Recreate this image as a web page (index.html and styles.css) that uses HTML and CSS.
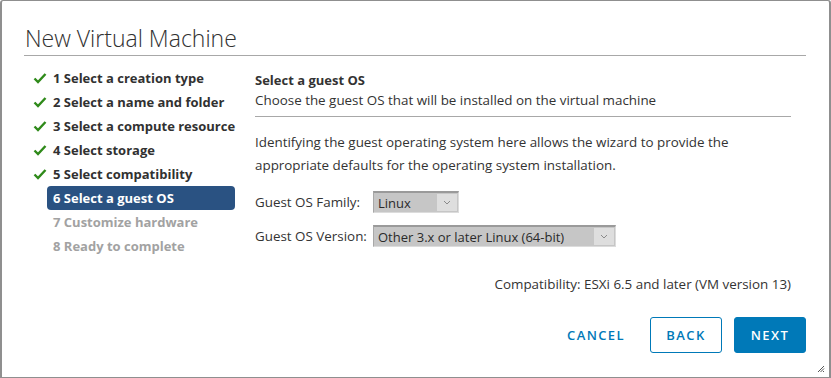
FILE: index.html
```html
<!DOCTYPE html>
<html lang="en">
<head>
    <meta charset="UTF-8">
    <title>New Virtual Machine</title>
    <link rel="stylesheet" href="styles.css">
</head>
<body>
    <div class="dialog">
        <div class="dialog-header">
            <h1>New Virtual Machine</h1>
        </div>

        <div class="dialog-body">
            <ul class="steps">
                <li class="done"><svg class="check" viewBox="0 0 14 12"><path d="M1.5 6.5 L5 10 L12.5 2" /></svg><span>1 Select a creation type</span></li>
                <li class="done"><svg class="check" viewBox="0 0 14 12"><path d="M1.5 6.5 L5 10 L12.5 2" /></svg><span>2 Select a name and folder</span></li>
                <li class="done"><svg class="check" viewBox="0 0 14 12"><path d="M1.5 6.5 L5 10 L12.5 2" /></svg><span>3 Select a compute resource</span></li>
                <li class="done"><svg class="check" viewBox="0 0 14 12"><path d="M1.5 6.5 L5 10 L12.5 2" /></svg><span>4 Select storage</span></li>
                <li class="done"><svg class="check" viewBox="0 0 14 12"><path d="M1.5 6.5 L5 10 L12.5 2" /></svg><span>5 Select compatibility</span></li>
                <li class="active"><i class="check"></i><span>6 Select a guest OS</span></li>
                <li class="todo"><i class="check"></i><span>7 Customize hardware</span></li>
                <li class="todo"><i class="check"></i><span>8 Ready to complete</span></li>
            </ul>

            <div class="content">
                <div class="page-title">
                    <h2>Select a guest OS</h2>
                    <p>Choose the guest OS that will be installed on the virtual machine</p>
                </div>
                <p class="intro">Identifying the guest operating system here allows the wizard to provide the appropriate defaults for the operating system installation.</p>

                <div class="form">
                    <div class="form-row">
                        <label>Guest OS Family:</label>
                        <div class="select select-family">
                            <span class="value">Linux</span>
                            <span class="arrow"><svg viewBox="0 0 8 5"><path d="M1 1 L4 4 L7 1" /></svg></span>
                        </div>
                    </div>
                    <div class="form-row">
                        <label>Guest OS Version:</label>
                        <div class="select select-version">
                            <span class="value">Other 3.x or later Linux (64-bit)</span>
                            <span class="arrow"><svg viewBox="0 0 8 5"><path d="M1 1 L4 4 L7 1" /></svg></span>
                        </div>
                    </div>
                </div>

                <p class="compat">Compatibility: ESXi 6.5 and later (VM version 13)</p>
            </div>
        </div>

        <div class="dialog-footer">
            <button class="btn btn-flat">Cancel</button>
            <button class="btn btn-outline">Back</button>
            <button class="btn btn-primary">Next</button>
        </div>

        <svg class="grip" viewBox="0 0 8 8"><path d="M7 1 L1 7 M7 3.5 L3.5 7 M7 6 L6 7" /></svg>
    </div>
</body>
</html>
```

FILE: styles.css
```css
/* General */
html, body {
    margin: 0;
    padding: 0;
    height: 100%;
    background: #ffffff;
}

body {
    font-family: "Open Sans", "Liberation Sans", sans-serif;
    color: #333333;
}

h1, h2, p, ul, li {
    margin: 0;
    padding: 0;
}

/* Dialog frame */
.dialog {
    position: relative;
    box-sizing: border-box;
    height: 100%;
    display: flex;
    flex-direction: column;
    border: 1px solid #8f8f8f;
    border-left-width: 2px;
    border-right-width: 2px;
    border-radius: 3px 3px 0 0;
}

.dialog-header {
    margin: 0 23px 0 22px;
    padding-top: 21px;
    border-bottom: 1px solid #a8a8a8;
}

.dialog-header h1 {
    font-size: 23px;
    font-weight: 300;
    line-height: 32px;
    color: #313131;
    padding-bottom: 1px;
    padding-left: 1px;
}

.dialog-body {
    flex: 1;
    display: flex;
    gap: 20px;
    padding: 10px 38px 0 31px;
}

/* Steps */
.steps {
    list-style: none;
    width: 202px;
    flex-shrink: 0;
}

.steps li {
    display: flex;
    align-items: center;
    height: 24px;
    font-size: 13px;
    font-weight: 700;
    color: #313131;
    white-space: nowrap;
}

.steps .check {
    width: 14px;
    height: 12px;
    flex-shrink: 0;
}

.steps svg.check path {
    fill: none;
    stroke: #2f8a1a;
    stroke-width: 2.4;
}

.steps li span {
    flex: 1;
    height: 24px;
    line-height: 24px;
    padding: 0 6px;
    border-radius: 4px;
}

.steps li.active span {
    background: #2a5282;
    color: #ffffff;
}

.steps li.todo span {
    color: #a2a2a2;
}

/* Content */
.content {
    flex: 1;
    font-size: 13.4px;
}

.page-title {
    padding-top: 4px;
    padding-bottom: 6px;
    border-bottom: 1px solid #a8a8a8;
}

.page-title h2 {
    font-size: 13px;
    font-weight: 700;
    line-height: 20px;
}

.page-title p {
    line-height: 20px;
}

.intro {
    margin-top: 14px;
    line-height: 23px;
}

.form {
    margin-top: 14px;
    display: flex;
    flex-direction: column;
    gap: 12px;
}

.form-row {
    display: flex;
    align-items: center;
}

.form-row label {
    width: 118px;
}

.select {
    display: flex;
    height: 22px;
    box-sizing: border-box;
    background: #c6c6c6;
    border-top: 2px solid #9a9a9a;
    border-left: 1px solid #a8a8a8;
    border-bottom: 1px solid #dcdcdc;
    border-right: 1px solid #dcdcdc;
    color: #2a2a2a;
}

.select .value {
    flex: 1;
    padding-left: 4px;
    line-height: 20px;
    font-size: 13px;
}

.select .arrow {
    width: 20px;
    display: flex;
    align-items: center;
    justify-content: center;
    background: #dedede;
    margin: 1px 1px 1px 0;
}

.select .arrow svg {
    width: 8px;
    height: 5px;
}

.select .arrow path {
    fill: none;
    stroke: #8a8a8a;
    stroke-width: 1;
}

.select-family {
    width: 86px;
}

.select-version {
    width: 243px;
}

.compat {
    margin-top: 28px;
    text-align: right;
}

/* Footer */
.dialog-footer {
    display: flex;
    justify-content: flex-end;
    gap: 12px;
    padding: 0 23px 24px 0;
}

.btn {
    height: 36px;
    min-width: 72px;
    padding: 0 12px;
    box-sizing: border-box;
    font-family: "Open Sans", "Liberation Sans", sans-serif;
    font-size: 13px;
    font-weight: 600;
    letter-spacing: 1.4px;
    text-transform: uppercase;
    border-radius: 3px;
    border: 1px solid transparent;
    background: none;
}

.btn-flat {
    color: #0079b8;
}

.btn-outline {
    color: #0079b8;
    border-color: #0079b8;
}

.btn-primary {
    color: #ffffff;
    background: #0079b8;
    border-color: #0079b8;
}

/* Resize grip in the corner */
.grip {
    position: absolute;
    right: 4px;
    bottom: 4px;
    width: 8px;
    height: 8px;
}

.grip path {
    stroke: #555555;
    stroke-width: 1;
}
```
